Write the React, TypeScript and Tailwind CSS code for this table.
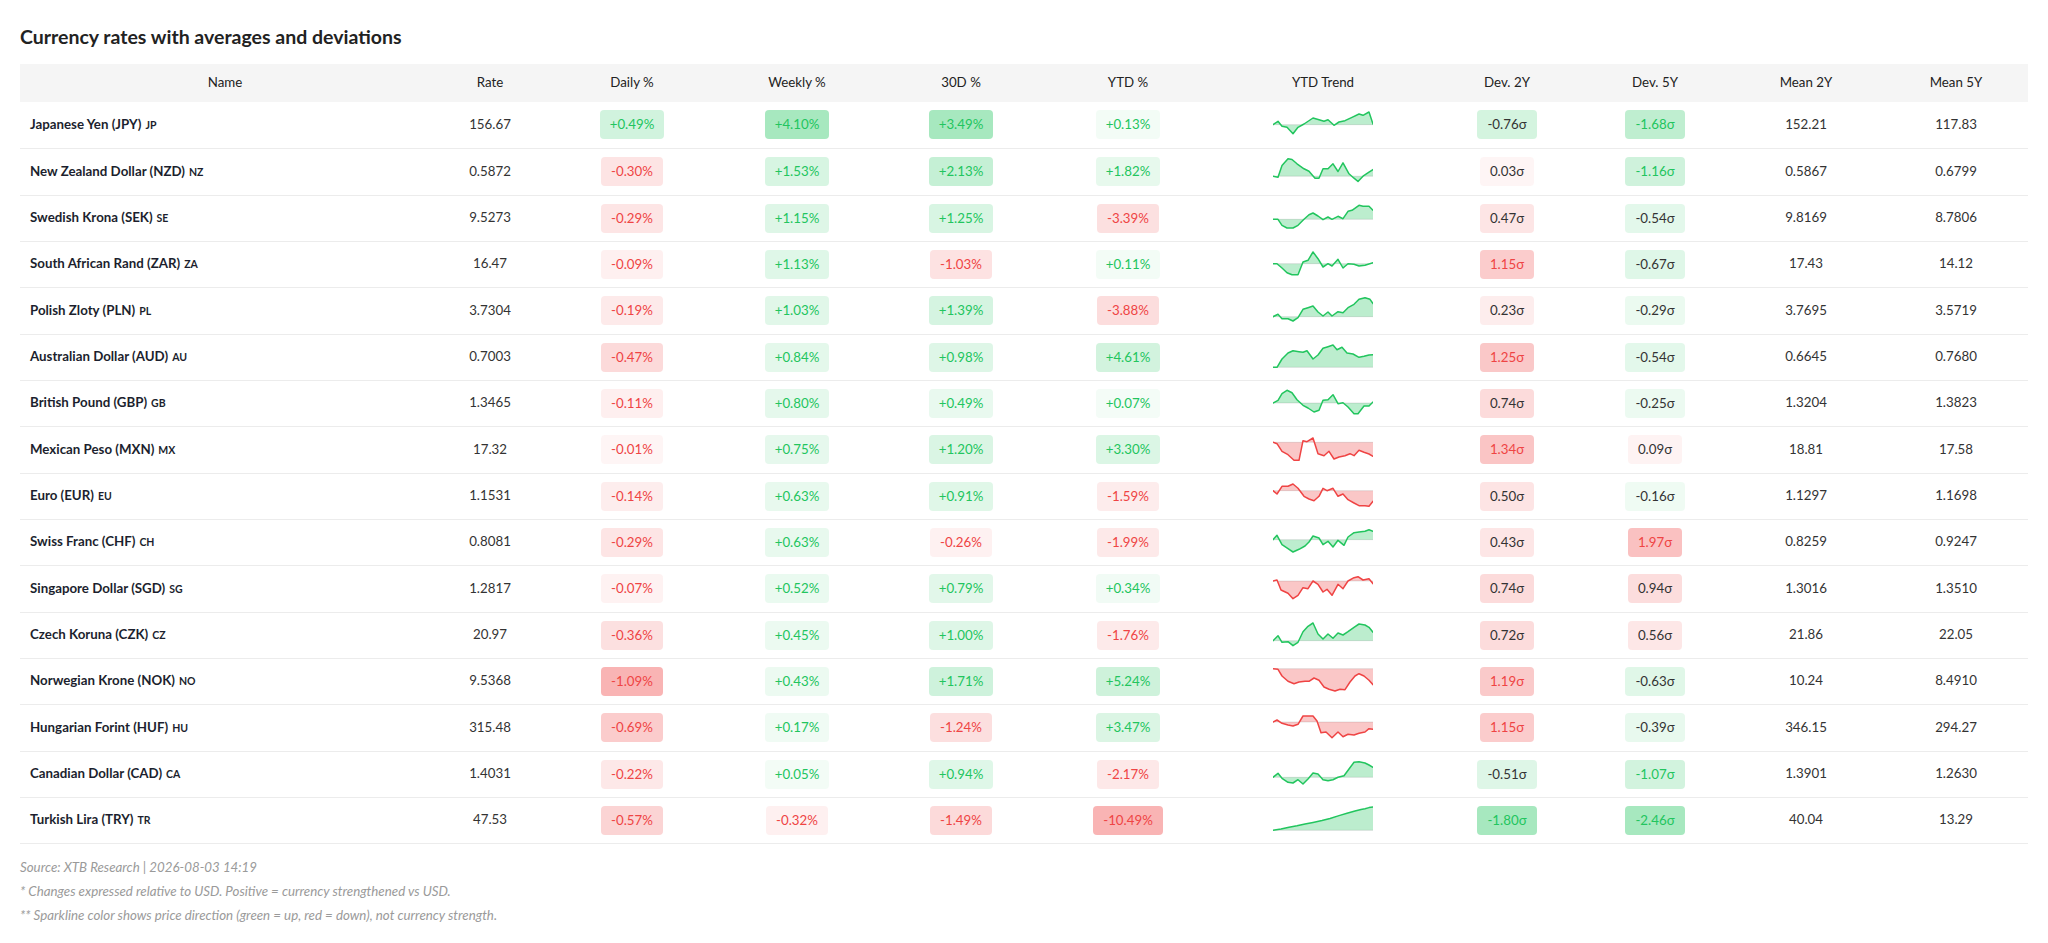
import React from 'react';

type Row = {
    name: string;
    code: string;
    rate: string;
    daily: number;
    weekly: number;
    d30: number;
    ytd: number;
    dev2: number;
    dev5: number;
    mean2: string;
    mean5: string;
    up: boolean;
    trend: number[][];
};

const ROWS: Row[] = [
    { name: "Japanese Yen (JPY)", code: "JP", rate: "156.67", daily: 0.49, weekly: 4.10, d30: 3.49, ytd: 0.13, dev2: -0.76, dev5: -1.68, mean2: "152.21", mean5: "117.83", up: true,
      trend: [[0,21.7],[5,18.3],[9,23.3],[14,24.3],[20,30.7],[25,24.3],[31,21],[40,15],[46,16.7],[51,18.3],[55,16.7],[61,22.3],[66,19],[72,17.7],[79,14.3],[86,11],[90,12.3],[96,9],[100,21]] },
    { name: "New Zealand Dollar (NZD)", code: "NZ", rate: "0.5872", daily: -0.30, weekly: 1.53, d30: 2.13, ytd: 1.82, dev2: 0.03, dev5: -1.16, mean2: "0.5867", mean5: "0.6799", up: true,
      trend: [[0,26.2],[5,27.2],[9,15.5],[15,8.8],[19,9.5],[24,13.8],[31,18.8],[36,21.2],[42,28.2],[46,28.2],[50,18.8],[55,18.8],[60,13.8],[65,21.5],[70,12.8],[76,23.8],[81,28.2],[85,31.5],[90,26.2],[96,22.2],[100,19.5]] },
    { name: "Swedish Krona (SEK)", code: "SE", rate: "9.5273", daily: -0.29, weekly: 1.15, d30: 1.25, ytd: -3.39, dev2: 0.47, dev5: -0.54, mean2: "9.8169", mean5: "8.7806", up: true,
      trend: [[0,23.3],[5,23.3],[9,29.3],[14,32],[20,32],[25,29.3],[31,23.3],[36,18.7],[40,17],[45,20],[50,23.7],[55,21],[59,23.3],[65,20.3],[70,22.7],[75,15.3],[79,14.3],[86,9.3],[90,10.3],[96,10.3],[100,14.3]] },
    { name: "South African Rand (ZAR)", code: "ZA", rate: "16.47", daily: -0.09, weekly: 1.13, d30: -1.03, ytd: 0.11, dev2: 1.15, dev5: -0.67, mean2: "17.43", mean5: "14.12", up: true,
      trend: [[0,21.7],[4,21.7],[9,26],[14,30.7],[19,32.7],[25,32.7],[30,20],[35,18.3],[40,10],[45,16.7],[50,25],[55,21.7],[59,24],[65,17.3],[70,26],[75,21.7],[81,22.3],[86,24],[92,23.3],[100,20.7]] },
    { name: "Polish Zloty (PLN)", code: "PL", rate: "3.7304", daily: -0.19, weekly: 1.03, d30: 1.39, ytd: -3.88, dev2: 0.23, dev5: -0.29, mean2: "3.7695", mean5: "3.5719", up: true,
      trend: [[0,27.7],[5,25.3],[9,29.7],[15,29.7],[20,32],[25,28.7],[30,20.3],[35,18.7],[40,17],[45,23],[50,27],[55,23],[59,27],[65,22.7],[70,23.7],[75,18.7],[81,15.3],[86,10.3],[92,8.7],[97,10.3],[100,14.7]] },
    { name: "Australian Dollar (AUD)", code: "AU", rate: "0.7003", daily: -0.47, weekly: 0.84, d30: 0.98, ytd: 4.61, dev2: 1.25, dev5: -0.54, mean2: "0.6645", mean5: "0.7680", up: true,
      trend: [[0,32.3],[4,32.3],[9,24],[15,18],[20,15.7],[26,16.7],[30,17.3],[34,15.7],[40,24],[45,20],[50,13.3],[55,11.7],[60,10],[64,14.7],[69,12.3],[74,18],[80,19],[86,22.3],[91,21.3],[96,20],[100,19.7]] },
    { name: "British Pound (GBP)", code: "GB", rate: "1.3465", daily: -0.11, weekly: 0.80, d30: 0.49, ytd: 0.07, dev2: 0.74, dev5: -0.25, mean2: "1.3204", mean5: "1.3823", up: true,
      trend: [[0,22],[5,19.3],[9,12.7],[14,9.3],[19,11.7],[24,18.7],[30,24.3],[35,27],[41,31],[46,29.3],[50,19.3],[55,18.7],[60,13.7],[65,22.7],[70,21.7],[75,26],[81,32.7],[85,32.7],[91,25],[96,25],[100,21]] },
    { name: "Mexican Peso (MXN)", code: "MX", rate: "17.32", daily: -0.01, weekly: 0.75, d30: 1.20, ytd: 3.30, dev2: 1.34, dev5: 0.09, mean2: "18.81", mean5: "17.58", up: false,
      trend: [[0,14.3],[4,15.7],[9,23.3],[15,26.7],[21,32.3],[26,32.3],[30,12.7],[34,13.7],[40,10],[45,25.7],[51,27.7],[56,23.3],[61,31],[66,29],[72,27.7],[77,25.7],[81,27.7],[86,22.3],[91,24.3],[96,26],[100,28.3]] },
    { name: "Euro (EUR)", code: "EU", rate: "1.1531", daily: -0.14, weekly: 0.63, d30: 0.91, ytd: -1.59, dev2: 0.50, dev5: -0.16, mean2: "1.1297", mean5: "1.1698", up: false,
      trend: [[0,16.7],[4,20],[9,12.3],[15,12.3],[20,10],[25,14.3],[31,22.3],[36,25],[41,26.7],[46,22.3],[50,14.3],[54,16.7],[60,14.3],[65,22.3],[70,20],[75,25.7],[81,29],[86,31.7],[92,31.7],[96,32.3],[100,27.3]] },
    { name: "Swiss Franc (CHF)", code: "CH", rate: "0.8081", daily: -0.29, weekly: 0.63, d30: -0.26, ytd: -1.99, dev2: 0.43, dev5: 1.97, mean2: "0.8259", mean5: "0.9247", up: true,
      trend: [[0,19.7],[4,15.3],[9,24.7],[15,28.7],[20,32],[26,29.3],[32,26],[36,22],[40,16],[46,18],[50,24.7],[55,21.3],[60,27],[65,20.3],[71,25.3],[75,17],[81,12.7],[86,12],[92,11.3],[96,9.7],[100,11.3]] },
    { name: "Singapore Dollar (SGD)", code: "SG", rate: "1.2817", daily: -0.07, weekly: 0.52, d30: 0.79, ytd: 0.34, dev2: 0.74, dev5: 0.94, mean2: "1.3016", mean5: "1.3510", up: false,
      trend: [[0,14],[4,13],[8,23],[15,26.3],[20,31.7],[25,28.3],[30,20.7],[35,21.7],[40,14],[45,17.3],[50,25],[54,22.3],[59,28.3],[65,17.3],[70,21.7],[75,14],[81,10.7],[85,9.7],[90,13],[96,11.7],[100,16.7]] },
    { name: "Czech Koruna (CZK)", code: "CZ", rate: "20.97", daily: -0.36, weekly: 0.45, d30: 1.00, ytd: -1.76, dev2: 0.72, dev5: 0.56, mean2: "21.86", mean5: "22.05", up: true,
      trend: [[0,27.7],[5,22.7],[9,29.3],[15,28.7],[20,32.7],[25,29.3],[30,18.7],[35,13.3],[40,10],[45,21],[50,26],[55,21],[60,25.3],[65,20],[70,22],[75,18.7],[81,14.3],[86,11],[92,12],[96,14.3],[100,19.3]] },
    { name: "Norwegian Krone (NOK)", code: "NO", rate: "9.5368", daily: -1.09, weekly: 0.43, d30: 1.71, ytd: 5.24, dev2: 1.19, dev5: -0.63, mean2: "10.24", mean5: "8.4910", up: false,
      trend: [[0,9.7],[5,10.3],[9,17],[15,22.3],[21,24.7],[26,23],[32,22.3],[36,22.3],[41,19],[46,21.3],[51,28],[56,30.3],[62,32],[67,30.3],[72,30.7],[77,23],[82,17],[86,14.7],[91,17],[96,21.3],[100,25.7]] },
    { name: "Hungarian Forint (HUF)", code: "HU", rate: "315.48", daily: -0.69, weekly: 0.17, d30: -1.24, ytd: 3.47, dev2: 1.15, dev5: -0.39, mean2: "346.15", mean5: "294.27", up: false,
      trend: [[0,16],[4,14],[9,17.3],[15,19],[20,20],[25,18.3],[30,10],[35,10],[40,10],[44,15],[48,26.7],[53,26],[59,31.7],[65,26],[70,30.7],[75,28.3],[81,29],[86,27.3],[92,26],[96,22.7],[100,23.3]] },
    { name: "Canadian Dollar (CAD)", code: "CA", rate: "1.4031", daily: -0.22, weekly: 0.05, d30: 0.94, ytd: -2.17, dev2: -0.51, dev5: -1.07, mean2: "1.3901", mean5: "1.2630", up: true,
      trend: [[0,25.3],[5,21.3],[9,26.3],[15,30.3],[20,31],[25,27.7],[30,32],[35,27],[40,21],[45,22],[50,27.7],[55,28.7],[60,27.7],[65,25.3],[71,23.7],[76,17],[81,10.3],[86,9.7],[92,11],[96,13],[100,15.3]] },
    { name: "Turkish Lira (TRY)", code: "TR", rate: "47.53", daily: -0.57, weekly: -0.32, d30: -1.49, ytd: -10.49, dev2: -1.80, dev5: -2.46, mean2: "40.04", mean5: "13.29", up: true,
      trend: [[0,32.3],[8,31],[16,29.3],[24,27.8],[32,26],[40,24.4],[49,22.6],[57,20.5],[66,17.6],[74,15.3],[82,13],[88,11.5],[92,10.7],[96,9.6],[100,9]] },
];

const TABLE_HEAD = ["Name", "Rate", "Daily %", "Weekly %", "30D %", "YTD %", "YTD Trend", "Dev. 2Y", "Dev. 5Y", "Mean 2Y", "Mean 5Y"];
const COL_WIDTHS = ["w-[410px]", "w-[120px]", "w-[164px]", "w-[166px]", "w-[162px]", "w-[172px]", "w-[218px]", "w-[150px]", "w-[146px]", "w-[156px]", "w-[144px]"];

const maxAbs = (key: "daily" | "weekly" | "d30" | "ytd" | "dev2" | "dev5") =>
    Math.max(...ROWS.map((r) => Math.abs(r[key])));

const MAX = {
    daily: maxAbs("daily"),
    weekly: maxAbs("weekly"),
    d30: maxAbs("d30"),
    ytd: maxAbs("ytd"),
    dev2: maxAbs("dev2"),
    dev5: maxAbs("dev5"),
};

// background strength follows the size of the move within its column
const tint = (v: number, max: number, greenWhenPositive: boolean) => {
    const a = 0.05 + 0.35 * (Math.abs(v) / max);
    const green = greenWhenPositive ? v >= 0 : v < 0;
    return green ? `rgba(34,197,94,${a.toFixed(3)})` : `rgba(239,68,68,${a.toFixed(3)})`;
};

const PctBadge = ({ v, max }: { v: number; max: number }) => (
    <span
        className={`inline-block rounded-[4px] px-[10px] py-[6px] leading-[17px] ${v >= 0 ? "text-[#22c55e]" : "text-[#ef4444]"}`}
        style={{ backgroundColor: tint(v, max, true) }}
    >
        {v >= 0 ? "+" : ""}
        {v.toFixed(2)}%
    </span>
);

const DevBadge = ({ v, max }: { v: number; max: number }) => {
    const strong = Math.abs(v) >= 1;
    const color = !strong ? "text-[#333333]" : v < 0 ? "text-[#22c55e]" : "text-[#ef4444]";
    return (
        <span
            className={`inline-block rounded-[4px] px-[10px] py-[6px] leading-[17px] ${color}`}
            style={{ backgroundColor: tint(v, max, false) }}
        >
            {v.toFixed(2)}σ
        </span>
    );
};

const Sparkline = ({ pts, up }: { pts: number[][]; up: boolean }) => {
    const base = pts[0][1];
    const line = pts.map(([x, y]) => `${x},${y}`).join(" ");
    const area = `0,${base} ${line} 100,${base}`;
    const stroke = up ? "#22c55e" : "#ef4444";
    const fill = up ? "rgba(34,197,94,0.3)" : "rgba(239,68,68,0.3)";
    return (
        <svg width="100" height="44" viewBox="0 0 100 44" className="mx-auto block">
            <polygon points={area} fill={fill} />
            <line x1="0" y1={base} x2="100" y2={base} stroke="rgba(0,0,0,0.1)" strokeWidth="1" />
            <polyline points={line} fill="none" stroke={stroke} strokeWidth="1.5" strokeLinejoin="round" strokeLinecap="round" />
        </svg>
    );
};

const App = () => {
    return (
        <div className="min-h-screen bg-white px-5 pt-[23px] font-['Lato',sans-serif] text-[#333333]">
            <h2 className="mb-[13px] text-[19.5px] font-bold leading-[28px] text-[#222222]">
                Currency rates with averages and deviations
            </h2>
            <table className="w-full table-fixed border-collapse text-[13.3px]">
                <colgroup>
                    {COL_WIDTHS.map((w, i) => (
                        <col key={i} className={w} />
                    ))}
                </colgroup>
                <thead>
                    <tr className="bg-[#f5f5f5]">
                        {TABLE_HEAD.map((head) => (
                            <th key={head} className="h-[38px] p-0 text-center font-normal text-[#222222]">
                                {head}
                            </th>
                        ))}
                    </tr>
                </thead>
                <tbody>
                    {ROWS.map((r, index) => {
                        // rows in the source average ~46.3px, so every third row is a pixel taller
                        const nameClass = index % 3 === 1
                            ? "h-[47px] p-0 pl-[10px] text-left font-bold text-[#1c1f2e]"
                            : "h-[46px] p-0 pl-[10px] text-left font-bold text-[#1c1f2e]";
                        return (
                            <tr key={r.code} className="border-b border-[#ececec]">
                                <td className={nameClass}>
                                    {r.name}
                                    <span className="ml-[4px] text-[10.5px] font-bold">{r.code}</span>
                                </td>
                                <td className="p-0 text-center">{r.rate}</td>
                                <td className="p-0 text-center"><PctBadge v={r.daily} max={MAX.daily} /></td>
                                <td className="p-0 text-center"><PctBadge v={r.weekly} max={MAX.weekly} /></td>
                                <td className="p-0 text-center"><PctBadge v={r.d30} max={MAX.d30} /></td>
                                <td className="p-0 text-center"><PctBadge v={r.ytd} max={MAX.ytd} /></td>
                                <td className="p-0"><Sparkline pts={r.trend} up={r.up} /></td>
                                <td className="p-0 text-center"><DevBadge v={r.dev2} max={MAX.dev2} /></td>
                                <td className="p-0 text-center"><DevBadge v={r.dev5} max={MAX.dev5} /></td>
                                <td className="p-0 text-center">{r.mean2}</td>
                                <td className="p-0 text-center">{r.mean5}</td>
                            </tr>
                        );
                    })}
                </tbody>
            </table>
            <div className="mt-[11px] text-[13.3px] italic leading-6 text-[#9a9a9a]">
                <p>Source: XTB Research | 2026-08-03 14:19</p>
                <p>* Changes expressed relative to USD. Positive = currency strengthened vs USD.</p>
                <p>** Sparkline color shows price direction (green = up, red = down), not currency strength.</p>
            </div>
        </div>
    );
};

export default App;
